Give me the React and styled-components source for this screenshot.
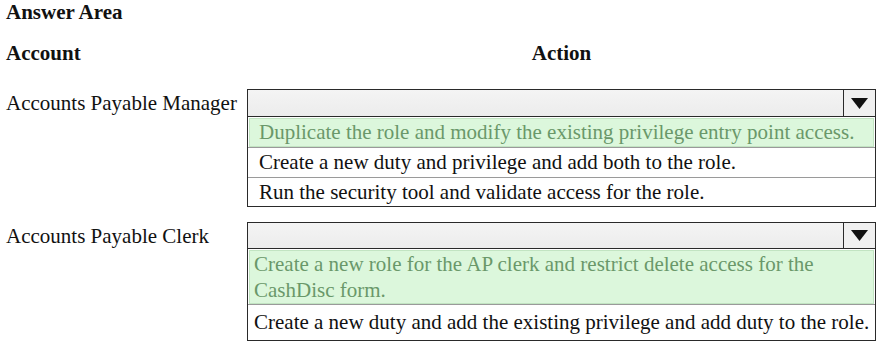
import React from "react";
import styled, { createGlobalStyle } from "styled-components";

/* --- Styles --- */
const GlobalStyle = createGlobalStyle`
  html, body {
    margin: 0;
    padding: 0;
    background: #ffffff;
  }
  body {
    font-family: "Liberation Serif", "Times New Roman", serif;
    color: #111;
  }
`;

const Page = styled.div`
  width: 884px;
  height: 345px;
  overflow: hidden;
  padding-left: 6px;
  box-sizing: border-box;
`;

const Title = styled.div`
  font-weight: 700;
  font-size: 21px;
  line-height: 24px;
`;

const HeadRow = styled.div`
  display: grid;
  grid-template-columns: 241px 629px;
  margin-top: 17px;
  font-weight: 700;
  font-size: 21px;
  line-height: 24px;
`;

const ActionHead = styled.div`
  text-align: center;
`;

const Row = styled.div`
  display: grid;
  grid-template-columns: 241px 629px;
  align-items: start;
  margin-top: ${p => p.$top}px;
`;

const Label = styled.div`
  font-size: 21px;
  line-height: ${p => p.$lh}px;
  white-space: nowrap;
`;

const Select = styled.div`
  display: flex;
  flex-direction: column;
`;

const SelectHead = styled.div`
  display: flex;
  height: ${p => p.$h}px;
  border: 1px solid #2a2a2a;
  background: linear-gradient(#f4f4f4, #ececec);
`;

const SelectBlank = styled.div`
  flex: 1;
`;

const ArrowCell = styled.div`
  width: 31px;
  border-left: 1px solid #2a2a2a;
  display: flex;
  align-items: center;
  justify-content: center;
  background: #f0f0f0;
`;

const List = styled.div`
  border: 1px solid #2a2a2a;
  border-top: none;
  display: flex;
  flex-direction: column;
`;

const Option = styled.div`
  font-size: 21px;
  line-height: ${p => p.$lh}px;
  padding-left: ${p => p.$pad}px;
  color: #111;
  border-top: 1px solid #9a9a9a;
  &:first-child {
    border-top: none;
  }
`;

const Chosen = styled(Option)`
  margin: 1px 1px 0 1px;
  color: #6a986a;
  background: #dcf7dc;
  border: 1px solid #c2e4c2;
  &:first-child {
    border-top: 1px solid #c2e4c2;
  }
`;

/* --- Component --- */
const Arrow = () => (
  <svg width="17" height="11" viewBox="0 0 17 11">
    <polygon points="0,0 17,0 8.5,11" fill="#111" />
  </svg>
);

const Dropdown = ({ headH, children }) => (
  <Select>
    <SelectHead $h={headH}>
      <SelectBlank />
      <ArrowCell>
        <Arrow />
      </ArrowCell>
    </SelectHead>
    <List>{children}</List>
  </Select>
);

export default function App() {
  return (
    <Page>
      <GlobalStyle />
      <Title>Answer Area</Title>
      <HeadRow>
        <div>Account</div>
        <ActionHead>Action</ActionHead>
      </HeadRow>

      <Row $top={24}>
        <Label $lh={28}>Accounts Payable Manager</Label>
        <Dropdown headH={26}>
          <Chosen $lh={27} $pad={9}>
            Duplicate the role and modify the existing privilege entry point access.
          </Chosen>
          <Option $lh={29} $pad={11}>
            Create a new duty and privilege and add both to the role.
          </Option>
          <Option $lh={28} $pad={11}>
            Run the security tool and validate access for the role.
          </Option>
        </Dropdown>
      </Row>

      <Row $top={15}>
        <Label $lh={28}>Accounts Payable Clerk</Label>
        <Dropdown headH={25}>
          <Chosen $lh={26} $pad={4}>
            Create a new role for the AP clerk and restrict delete access for the
            <br />
            CashDisc form.
          </Chosen>
          <Option $lh={35} $pad={6}>
            Create a new duty and add the existing privilege and add duty to the role.
          </Option>
        </Dropdown>
      </Row>
    </Page>
  );
}
